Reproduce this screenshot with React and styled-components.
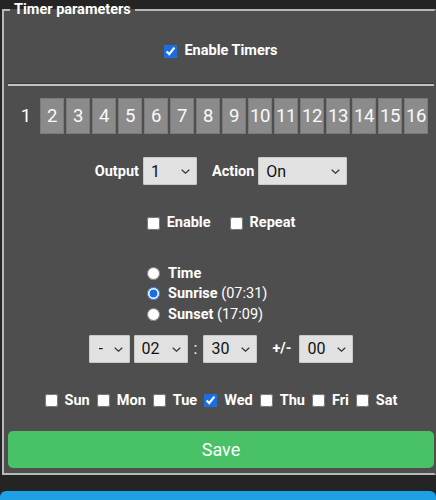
import React from "react";
import styled, { createGlobalStyle } from "styled-components";

const Global = createGlobalStyle`
  html, body { margin: 0; padding: 0; }
  body {
    background: #242424;
    font-family: Roboto, "Liberation Sans", sans-serif;
    color: #fff;
    overflow: hidden;
  }
`;

const Page = styled.div`
  width: 436px;
  height: 500px;
  overflow: hidden;
`;

/* the right border is cut off by the window edge in the reference, so it is drawn in the panel colour */
const Fieldset = styled.fieldset`
  box-sizing: border-box;
  width: 434px;
  margin: 0 0 0 2px;
  padding: 0 0 5px 4px;
  border: 2px solid #b9b9b9;
  border-right-color: #4e4e4e;
  background: #4e4e4e;
  display: flex;
  flex-direction: column;
`;

const Legend = styled.legend`
  font-size: 14.5px;
  font-weight: 700;
  line-height: 20px;
  padding: 0 4px;
  margin-left: 2px;
`;

const Row = styled.div`
  display: flex;
  align-items: center;
  justify-content: center;
  margin-top: ${(p) => p.$mt || 0}px;
  gap: ${(p) => p.$gap || 0}px;
  height: ${(p) => p.$h || 20}px;
`;

const CheckLabel = styled.label`
  display: inline-flex;
  align-items: center;
  gap: ${(p) => p.$gap || 7}px;
  font-size: 14.5px;
  font-weight: 700;
  line-height: 20px;
`;

const Box = styled.input`
  margin: 0;
  width: 13px;
  height: 13px;
  accent-color: #1a6ee3;
`;

const Divider = styled.div`
  margin-top: 22px;
  height: 0;
  border-top: 1px solid #383838;
  border-bottom: 2px solid #c2c2c2;
`;

const Tabs = styled.div`
  display: flex;
  justify-content: center;
  margin-top: 12px;
  height: 36px;
`;

const TabCurrent = styled.div`
  width: 26px;
  display: flex;
  align-items: center;
  justify-content: center;
  font-size: 18.5px;
`;

const Tab = styled.div`
  box-sizing: border-box;
  width: 24.5px;
  margin: 0 0.75px;
  height: 36px;
  background: #8b8b8b;
  border: 1px solid #7a7a7a;
  display: flex;
  align-items: center;
  justify-content: center;
  font-size: 18.5px;
  letter-spacing: -0.4px;
  color: #fafafa;
`;

const FieldLabel = styled.span`
  font-size: 14.5px;
  font-weight: 700;
  margin-left: ${(p) => p.$ml || 0}px;
  margin-right: 4px;
`;

const SelectWrap = styled.div`
  position: relative;
  width: ${(p) => p.$w}px;
  height: 28px;
  margin-right: ${(p) => p.$mr || 0}px;
`;

const Select = styled.select`
  appearance: none;
  -webkit-appearance: none;
  box-sizing: border-box;
  width: 100%;
  height: 100%;
  margin: 0;
  border: 1px solid #c9c9c9;
  border-radius: 1px;
  background: #e1e1e1;
  color: #111;
  font-family: Roboto, "Liberation Sans", sans-serif;
  font-size: 16px;
  padding: 0 0 0 ${(p) => p.$pl || 7}px;
  outline: none;
`;

const Chevron = styled.svg`
  position: absolute;
  right: 7px;
  top: 12px;
  width: 9px;
  height: 5px;
  pointer-events: none;
`;

const Radios = styled.div`
  margin-top: 30px;
  margin-left: 139px;
  display: flex;
  flex-direction: column;
`;

const RadioLabel = styled.label`
  display: flex;
  align-items: center;
  gap: 8px;
  height: 20.5px;
  font-size: 14.5px;
  font-weight: 700;
`;

const Radio = styled.input`
  margin: 0;
  width: 13px;
  height: 13px;
  accent-color: #1a6ee3;
`;

const Light = styled.span`
  font-weight: 400;
`;

const Colon = styled.span`
  font-size: 16px;
  margin: 0 2px;
`;

const SaveButton = styled.button`
  margin-top: 20px;
  height: 37px;
  border: none;
  border-radius: 5px;
  background: #48c167;
  color: #fff;
  font-family: Roboto, "Liberation Sans", sans-serif;
  font-size: 18px;
`;

const BlueBar = styled.div`
  margin-top: 16px;
  height: 20px;
  background: #1e9fe6;
  border-radius: 6px 6px 0 0;
`;

const Sel = ({ w, value, options, pl, mr }) => (
  <SelectWrap $w={w} $mr={mr}>
    <Select $pl={pl} defaultValue={value}>
      {options.map((o) => (
        <option key={o}>{o}</option>
      ))}
    </Select>
    <Chevron viewBox="0 0 9 5">
      <path d="M0.7 0.7 L4.5 4.2 L8.3 0.7" fill="none" stroke="#333" strokeWidth="1.2" />
    </Chevron>
  </SelectWrap>
);

const days = ["Sun", "Mon", "Tue", "Wed", "Thu", "Fri", "Sat"];
const tabs = Array.from({ length: 15 }, (_, i) => i + 2);

export default function App() {
  return (
    <Page>
      <Global />
      <Fieldset>
        <Legend>Timer parameters</Legend>
        <Row $mt={21}>
          <CheckLabel>
            <Box type="checkbox" defaultChecked />
            Enable Timers
          </CheckLabel>
        </Row>
        <Divider />
        <Tabs>
          <TabCurrent>1</TabCurrent>
          {tabs.map((t) => (
            <Tab key={t}>{t}</Tab>
          ))}
        </Tabs>
        <Row $mt={23} $h={28}>
          <FieldLabel>Output</FieldLabel>
          <Sel w={54} value="1" options={["1", "2", "3", "4"]} mr={15} />
          <FieldLabel>Action</FieldLabel>
          <Sel w={89} value="On" options={["On", "Off", "Toggle"]} />
        </Row>
        <Row $mt={28} $gap={19}>
          <CheckLabel>
            <Box type="checkbox" />
            Enable
          </CheckLabel>
          <CheckLabel>
            <Box type="checkbox" />
            Repeat
          </CheckLabel>
        </Row>
        <Radios>
          <RadioLabel>
            <Radio type="radio" name="mode" />
            Time
          </RadioLabel>
          <RadioLabel>
            <Radio type="radio" name="mode" defaultChecked />
            <span>
              Sunrise <Light>(07:31)</Light>
            </span>
          </RadioLabel>
          <RadioLabel>
            <Radio type="radio" name="mode" />
            <span>
              Sunset <Light>(17:09)</Light>
            </span>
          </RadioLabel>
        </Radios>
        <Row $mt={10} $h={28} $gap={4}>
          <Sel w={41} value="-" pl={9} options={["-", "+"]} />
          <Sel w={54} value="02" options={["00", "01", "02", "03"]} />
          <Colon>:</Colon>
          <Sel w={54} value="30" options={["00", "15", "30", "45"]} />
          <FieldLabel $ml={11}>+/-</FieldLabel>
          <Sel w={54} value="00" options={["00", "05", "10"]} />
        </Row>
        <Row $mt={28} $gap={7}>
          {days.map((d) => (
            <CheckLabel key={d} $gap={7}>
              <Box type="checkbox" defaultChecked={d === "Wed"} />
              {d}
            </CheckLabel>
          ))}
        </Row>
        <SaveButton>Save</SaveButton>
      </Fieldset>
      <BlueBar />
    </Page>
  );
}
